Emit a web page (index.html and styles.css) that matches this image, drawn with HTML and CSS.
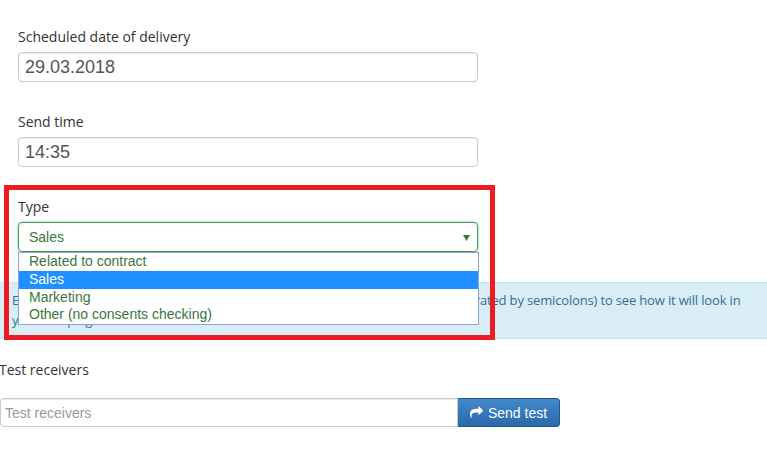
FILE: index.html
```html
<!DOCTYPE html>
<html lang="en">
<head>
    <meta charset="UTF-8">
    <meta name="viewport" content="width=device-width, initial-scale=1.0">
    <title>Campaign delivery</title>
    <link rel="stylesheet" href="styles.css">
</head>
<body>
    <main class="page">
        <div class="fields">
            <div class="form-group">
                <label>Scheduled date of delivery</label>
                <input class="form-control" type="text" value="29.03.2018">
            </div>

            <div class="form-group">
                <label>Send time</label>
                <input class="form-control" type="text" value="14:35">
            </div>

            <div class="form-group">
                <label>Type</label>
                <div class="select-wrap">
                    <div class="select-box">
                        <span>Sales</span>
                        <svg class="caret" viewBox="0 0 7 6" width="7" height="6"><path d="M0 0h7L3.5 6z" fill="#3c763d"/></svg>
                    </div>
                    <!-- opened list of the select -->
                    <ul class="select-list">
                        <li>Related to contract</li>
                        <li class="active">Sales</li>
                        <li>Marketing</li>
                        <li>Other (no consents checking)</li>
                    </ul>
                </div>
            </div>
        </div>

        <div class="alert-info">
            Enter the e-mail address or several e-mail addresses of the test receivers (separated by semicolons) to see how it will look in<br>
            your campaign.
        </div>

        <div class="test-group">
            <label>Test receivers</label>
            <div class="input-group">
                <input class="form-control" type="text" placeholder="Test receivers">
                <button class="btn-send" type="button">
                    <svg viewBox="0 0 1792 1792" width="13" height="13"><path fill="#fff" d="M1792 640q0 26-19 45l-512 512q-19 19-45 19t-45-19-19-45v-256h-224q-98 0-175.5 6t-154 21.5-133 42.5-105.5 69.5-80 101-48.5 138.5-17.5 181q0 55 5 123 0 6 2.5 23.5t2.5 26.5q0 15-8.5 25t-23.5 10q-16 0-28-17-7-9-13-22t-13.5-30-10.5-24q-127-285-127-451 0-199 53-333 162-403 875-403h224v-256q0-26 19-45t45-19 45 19l512 512q19 19 19 45z"/></svg>
                    Send test
                </button>
            </div>
        </div>

        <!-- red frame drawn over the screenshot -->
        <div class="highlight"></div>
    </main>
</body>
</html>
```

FILE: styles.css
```css
body {
    margin: 0;
    padding: 0;
    background: #fff;
    color: #333;
    font-family: "Open Sans", sans-serif;
    font-size: 14px;
    overflow: hidden;
}

.page {
    position: relative;
    padding-top: 27px;
}

.fields {
    width: 460px;
    margin-left: 18px;
}

.form-group {
    margin-bottom: 30px;
}

label {
    display: block;
    line-height: 20px;
    margin-bottom: 5px;
}

.form-control {
    display: block;
    box-sizing: border-box;
    width: 100%;
    height: 30px;
    margin: 0;
    padding: 0 6px;
    border: 1px solid #ccc;
    border-radius: 4px;
    box-shadow: inset 0 1px 1px rgba(0, 0, 0, 0.075);
    font-family: "Liberation Sans", Arial, sans-serif;
    font-size: 18px;
    color: #555;
    outline: none;
}

.form-control::placeholder {
    color: #999;
}

.select-wrap {
    position: relative;
}

.select-box {
    display: flex;
    justify-content: space-between;
    align-items: center;
    box-sizing: border-box;
    height: 30px;
    padding: 0 7px 0 10px;
    border: 1px solid #3da33d;
    border-radius: 4px;
    box-shadow: 0 0 3px rgba(102, 175, 233, 0.8);
    font-family: "Liberation Sans", Arial, sans-serif;
    font-size: 14px;
    color: #3c763d;
}

.caret {
    margin-top: 1px;
}

.select-list {
    position: absolute;
    top: 100%;
    left: 0;
    width: 461px;
    box-sizing: border-box;
    margin: 0;
    padding: 0;
    list-style: none;
    background: #fff;
    border: 1px solid #8ea3cf;
    font-family: "Liberation Sans", Arial, sans-serif;
    font-size: 14px;
    color: #3c763d;
    z-index: 2;
}

.select-list li {
    height: 17.8px;
    line-height: 17px;
    padding-left: 10px;
}

.select-list li.active {
    background: #1e90ff;
    color: #fff;
}

.alert-info {
    margin-bottom: 21px;
    padding: 7px 12px 8px;
    background: #d9edf7;
    border-top: 1px solid #c6e6f2;
    border-bottom: 1px solid #bce8f1;
    color: #31708f;
    font-size: 13px;
    letter-spacing: -0.16px;
    line-height: 20px;
    white-space: nowrap;
}

.test-group label {
    margin-bottom: 18px;
    margin-left: -1px;
}

.input-group {
    display: flex;
    width: 560px;
}

.input-group .form-control {
    width: 458px;
    height: 29px;
    padding-left: 4px;
    border-radius: 4px 0 0 4px;
    font-size: 14px;
}

.btn-send {
    display: flex;
    align-items: center;
    justify-content: center;
    gap: 5px;
    width: 102px;
    height: 29px;
    padding: 0;
    border: 1px solid #245580;
    border-left: none;
    border-radius: 0 4px 4px 0;
    background: linear-gradient(to bottom, #4289cb 0, #2a68ab 100%);
    color: #fff;
    font-family: "Liberation Sans", Arial, sans-serif;
    font-size: 14px;
}

.highlight {
    position: absolute;
    left: 4px;
    top: 185px;
    width: 481px;
    height: 145px;
    border: 5px solid #ed1c24;
    z-index: 3;
}
```
